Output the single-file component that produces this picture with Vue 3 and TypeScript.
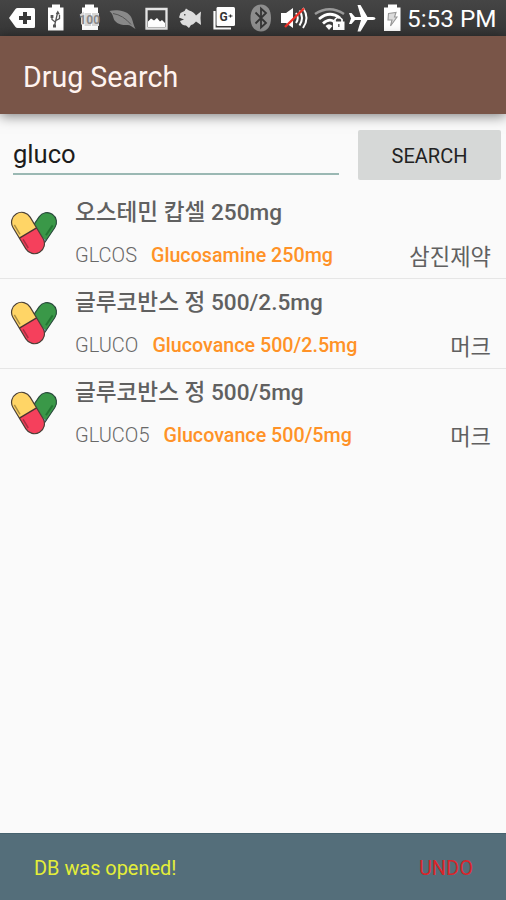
<script setup lang="ts">
import { ref } from 'vue'

interface Shape {
  d: string
  fill?: string
  stroke?: string
  width?: number
}
interface StatusIcon {
  name: string
  x: number
  w: number
  shapes: Shape[]
  label?: { text: string; x: number; y: number; size: number; color: string }
}
interface Drug {
  name: string
  code: string
  english: string
  maker: string
}

const query = ref('gluco')

const drugs: Drug[] = [
  { name: '오스테민 캅셀 250mg', code: 'GLCOS', english: 'Glucosamine 250mg', maker: '삼진제약' },
  { name: '글루코반스 정 500/2.5mg', code: 'GLUCO', english: 'Glucovance 500/2.5mg', maker: '머크' },
  { name: '글루코반스 정 500/5mg', code: 'GLUCO5', english: 'Glucovance 500/5mg', maker: '머크' },
]

// Each icon occupies one slot of the status strip; x is the slot's left edge.
const icons: StatusIcon[] = [
  {
    name: 'add', x: 0, w: 42,
    shapes: [
      { d: 'M9 18 15.500 9Q16.300 8 17.500 8H33.500Q35 8 35 9.500V26.500Q35 28 33.500 28H17.500Q16.300 28 15.500 27Z', fill: '#fff' },
      { d: 'M25 12V24M19 18H31', stroke: '#3a3a3a', width: 4 },
    ],
  },
  {
    name: 'usb-battery', x: 42, w: 32,
    shapes: [
      { d: 'M52 4.500H60V7.500H63.500V30.500H48V7.500H52Z', fill: '#fff' },
      { d: 'M54.500 26 57.500 13M55.200 22 52 19.500V16.500M56 20.500 59.500 18.500V15', stroke: '#555', width: 1.3 },
      { d: 'M57.800 10.500 60 14.500 55.800 14ZM50.600 15H53.400V18H50.600ZM53 24.500H56V27.500H53Z', fill: '#555' },
    ],
  },
  {
    name: 'full-battery', x: 74, w: 32,
    shapes: [
      { d: 'M85 4.500H94V7.500H98V30H82V7.500H85Z', fill: '#fff' },
      { d: 'M80.500 16 82.500 14.500V24.500M86 14.500H89.500V24.500H86ZM93.500 14.500H97.500V24.500H93.500Z', stroke: '#d8d8d8', width: 3 },
    ],
    label: { text: '100', x: 89.7, y: 24, size: 12, color: '#8a8a8a' },
  },
  {
    name: 'leaf', x: 106, w: 34,
    shapes: [
      { d: 'M109.500 11C116 9.500 126 10.500 130 15.500C133 19 132.500 23 135.500 29C132 27 130.500 25 127.500 25C119 25.500 114.500 22 113.500 18C112.500 14 111.500 13 109.500 11Z', fill: '#898989' },
      { d: 'M113 13.500Q123 15 131 24.500', stroke: '#555', width: 1 },
    ],
  },
  {
    name: 'picture', x: 140, w: 34,
    shapes: [
      { d: 'M146.500 9H166.500V28.500H146.500Z', stroke: '#e5e5e5', width: 2.3 },
      { d: 'M148 27V21.500L151 18.500 154 20.500 157 18 160 21.500 162 20 165 23V27Z', fill: '#fff' },
    ],
  },
  {
    name: 'fish', x: 174, w: 34,
    shapes: [
      { d: 'M180.500 13 184.500 11 186 8.500 189 10.500C192 11 195 13.500 196 15.500L201 11.500 200.500 18 201 25 196 21.500C194 24 192 25 191 25L189 28 186 25.500C183 25.500 181 24 180 21L184 19.500 179 17.500Z', fill: '#ddd' },
      { d: 'M184 14H185.500V15.500H184Z', fill: '#555' },
    ],
  },
  {
    name: 'news', x: 208, w: 36,
    shapes: [
      { d: 'M214.500 11V28.500H231', stroke: '#fff', width: 2.2 },
      { d: 'M217.500 7H233.500Q235 7 235 8.500V24.500Q235 26 233.500 26H217.500Q216.500 26 216.500 24.500V8.500Q216.500 7 217.500 7Z', fill: '#fff' },
      { d: 'M228.500 16H232.500M230.500 14.500V17.500', stroke: '#333', width: 1.2 },
    ],
    label: { text: 'G', x: 223.5, y: 20.5, size: 12, color: '#333' },
  },
  {
    name: 'bluetooth', x: 244, w: 34,
    shapes: [
      { d: 'M261 4.500C267.500 4.500 271 10 271 18S267.500 31.500 261 31.500S250.500 26 250.500 18S254.500 4.500 261 4.500Z', fill: '#8d8d8d' },
      { d: 'M255.500 12.500 266 23 261 27.500V8.500L266 13 255.500 23.500', stroke: '#343434', width: 1.8 },
    ],
  },
  {
    name: 'muted', x: 278, w: 34,
    shapes: [
      { d: 'M281 13H286L293 8V28L286 23H281Z', fill: '#fff' },
      { d: 'M296 13Q299.500 18 296 23M299.500 10.500Q304.500 18 299.500 25.500M303 8Q310 18 303 28', stroke: '#fff', width: 2 },
      { d: 'M285 27 304 8.500', stroke: '#ef3027', width: 2.4 },
    ],
  },
  {
    name: 'wifi', x: 312, w: 34,
    shapes: [
      { d: 'M315 14Q329.500 4.500 344 14', stroke: '#999', width: 2.6 },
      { d: 'M319 19Q329.500 10 340 18M323 23.500Q329 18 334 21.500', stroke: '#fff', width: 2.8 },
      { d: 'M325.500 26Q329 22.500 332.500 26L329 30Z', fill: '#fff' },
      { d: 'M335 22V19.500Q338.500 15 342 19.500V22', stroke: '#fff', width: 1.7 },
      { d: 'M333 21.500H344.500V30H333Z', fill: '#fff' },
      { d: 'M338.800 24V27', stroke: '#666', width: 1.5 },
    ],
  },
  {
    name: 'airplane', x: 346, w: 34,
    shapes: [
      { d: 'M349 13H351.500L355 17H361L357.500 5H360.500L367.500 17H373Q375.500 17.300 375.500 18.400T373 20H367.500L360.500 31.500H357.500L361 20H355L351.500 24H349L351 18.500Z', fill: '#fff' },
    ],
  },
  {
    name: 'charging', x: 380, w: 26,
    shapes: [
      { d: 'M388 4.500H397V7.500H400.500V31H384V7.500H388Z', fill: '#fff' },
      { d: 'M388.500 13.500 396 12.500 394.500 17H397L390.500 26 392 20H388Z', fill: '#ddd', stroke: '#999', width: 1.1 },
    ],
  },
]
</script>

<template>
  <div class="screen">
    <header class="status">
      <svg
        v-for="icon in icons"
        :key="icon.name"
        :width="icon.w"
        height="36"
        :viewBox="`${icon.x} 0 ${icon.w} 36`"
      >
        <path
          v-for="(shape, i) in icon.shapes"
          :key="i"
          :d="shape.d"
          :fill="shape.fill ?? 'none'"
          :stroke="shape.stroke"
          :stroke-width="shape.width"
        />
        <text
          v-if="icon.label"
          :x="icon.label.x"
          :y="icon.label.y"
          :font-size="icon.label.size"
          :fill="icon.label.color"
          class="icon-label"
        >{{ icon.label.text }}</text>
      </svg>
      <span class="time">5:53 PM</span>
    </header>

    <div class="app-bar"><h1>Drug Search</h1></div>

    <main>
      <form class="search" @submit.prevent>
        <input v-model="query" type="text" />
        <button type="submit">SEARCH</button>
      </form>

      <ul class="results">
        <li v-for="drug in drugs" :key="drug.name">
          <svg class="pills" width="48" height="44" viewBox="0 0 48 44">
            <g transform="translate(30 21.500) rotate(34)">
              <rect x="-9.500" y="-22" width="19" height="41" rx="9.500" fill="#7893c4" />
              <path d="M-9.500 3V-12.500A9.500 9.500 0 0 1 9.500 -12.500V3Z" fill="#3a9848" />
              <rect x="-9.500" y="-22" width="19" height="41" rx="9.500" fill="none" stroke="#2a4a3b" stroke-width="1.100" />
              <path d="M6.500 -13V-1" stroke="#237833" stroke-width="2" />
            </g>
            <g transform="translate(18 22) rotate(-31)">
              <rect x="-10" y="-22.500" width="20" height="45" rx="10" fill="#ffd566" />
              <path d="M-10 0H10V12.500A10 10 0 0 1 -10 12.500Z" fill="#f5405c" />
              <rect x="-10" y="-22.500" width="20" height="45" rx="10" fill="none" stroke="#4a4038" stroke-width="1.200" />
              <path d="M-10 0H10" stroke="#493333" stroke-width="1.300" />
              <path d="M-7.500 -14V-3" stroke="#a78b43" stroke-width="1.500" />
              <path d="M-7.500 3V13" stroke="#a92e42" stroke-width="1.500" />
            </g>
          </svg>
          <div class="info">
            <div class="name">{{ drug.name }}</div>
            <div class="detail">
              <span class="code">{{ drug.code }}</span>
              <span class="english">{{ drug.english }}</span>
              <span class="maker">{{ drug.maker }}</span>
            </div>
          </div>
        </li>
      </ul>
    </main>

    <footer class="snackbar">
      <span>DB was opened!</span>
      <button type="button">UNDO</button>
    </footer>
  </div>
</template>

<style>
body {
  margin: 0;
}
</style>

<style scoped>
.screen {
  display: flex;
  flex-direction: column;
  width: 506px;
  height: 900px;
  overflow: hidden;
  background: #fafafa;
  font-family: Roboto, 'Noto Sans CJK KR', sans-serif;
}
.status {
  display: flex;
  flex: none;
  height: 36px;
  background: linear-gradient(#454545, #363636);
  color: #fff;
}
.status svg {
  flex: none;
}
.icon-label {
  font-weight: 700;
  text-anchor: middle;
}
.time {
  padding-left: 1px;
  font-size: 24.3px;
  line-height: 38px;
  white-space: nowrap;
}
.app-bar {
  flex: none;
  box-sizing: border-box;
  height: 78px;
  padding-left: 23px;
  background: #795548;
  box-shadow: 0 2px 12px rgba(0, 0, 0, 0.5);
}
h1 {
  margin: 0;
  color: #fff3ef;
  font-size: 28.6px;
  font-weight: 400;
  line-height: 82px;
}
main {
  flex: 1;
}
.search {
  display: flex;
  align-items: flex-start;
  justify-content: space-between;
  height: 75px;
  box-sizing: border-box;
  padding: 16px 5px 0 13px;
}
.search input {
  box-sizing: border-box;
  width: 326px;
  height: 45px;
  padding: 5px 0 0;
  border: 0;
  border-bottom: 2px solid #9ab8b3;
  outline: 0;
  background: transparent;
  color: #1c1c1c;
  font: 400 25.6px Roboto, sans-serif;
}
.search button {
  width: 143px;
  height: 50px;
  padding: 1px 0 0;
  border: 0;
  border-radius: 2px;
  background: #d6d8d7;
  color: #222;
  font: 400 20px Roboto, sans-serif;
}
.results {
  margin: 0;
  padding: 0;
  list-style: none;
}
.results li {
  display: flex;
  box-sizing: border-box;
  height: 90px;
  padding: 0 15px 0 10px;
  border-bottom: 1px solid #e6e6e6;
}
.results li:last-child {
  border-bottom: 0;
}
.pills {
  flex: none;
  margin-top: 22px;
}
.info {
  flex: 1;
  margin-left: 17px;
}
.name {
  height: 44px;
  color: #606060;
  font-size: 22.6px;
  font-weight: 500;
  line-height: 47px;
  white-space: nowrap;
}
.detail {
  display: flex;
  color: #686868;
  font-size: 20px;
  line-height: 44px;
  white-space: nowrap;
}
.code {
  font-weight: 300;
}
.english {
  margin-left: 14px;
  padding-top: 1px;
  color: #ff9227;
  font-size: 19.7px;
  font-weight: 500;
}
.maker {
  margin-left: auto;
  padding-top: 2px;
  color: #606060;
  font-size: 22.2px;
}
.snackbar {
  display: flex;
  flex: none;
  align-items: center;
  justify-content: space-between;
  box-sizing: border-box;
  height: 67px;
  padding: 2px 33px 0 34px;
  border-top: 1px solid #47636f;
  background: #546e7a;
  color: #e4ee38;
  font-size: 19.9px;
}
.snackbar button {
  padding: 0;
  border: 0;
  background: transparent;
  color: #d9252b;
  font: 400 20px Roboto, sans-serif;
}
</style>
